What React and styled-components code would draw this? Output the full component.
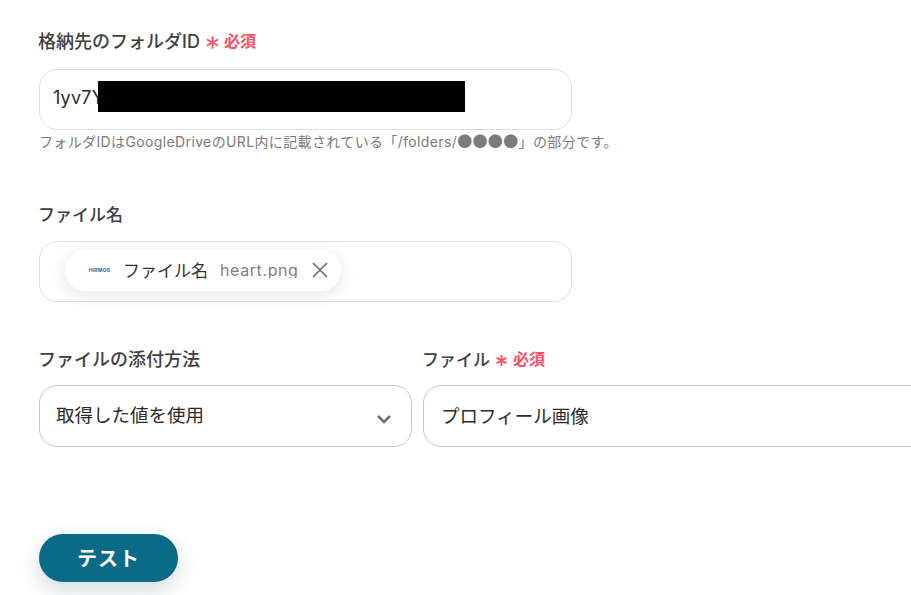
import React from 'react';
import styled, { createGlobalStyle } from 'styled-components';

const GlobalStyle = createGlobalStyle`
    html, body {
        margin: 0;
        background: #fff;
        overflow: hidden;
    }

    body {
        font-family: Inter, "Noto Sans CJK JP", sans-serif;
        color: #2b2b2b;
    }
`;

const Page = styled.div`
    width: 911px;
    height: 595px;
    overflow: hidden;
    box-sizing: border-box;
    padding: 27px 0 0 39px;
`;

const Field = styled.div`
    width: ${(p) => p.$width || '533px'};
    margin-bottom: ${(p) => p.$mb || '0'};
    flex-shrink: 0;
`;

const LabelRow = styled.div`
    display: flex;
    align-items: center;
    height: 26px;
    margin-bottom: ${(p) => p.$mb || '16px'};
`;

const Label = styled.label`
    margin-left: -1px;
    font-size: ${(p) => p.$size || '18px'};
    font-weight: 500;
    color: #404040;
`;

const Star = styled.svg`
    width: ${(p) => (p.$small ? '11px' : '13px')};
    height: ${(p) => (p.$small ? '11px' : '13px')};
    margin: 5px ${(p) => (p.$small ? '6px' : '5px')} 0 6px;
`;

const Required = styled.span`
    font-size: 16px;
    font-weight: 700;
    color: #ff4d63;
`;

const Box = styled.div`
    position: relative;
    display: flex;
    align-items: center;
    box-sizing: border-box;
    height: ${(p) => p.$height || '61px'};
    padding: 0 ${(p) => p.$pad || '13px'} ${(p) => p.$lift || '0'};
    border: 1px solid ${(p) => p.$border || '#dedfe4'};
    border-radius: 18px;
    background: #fff;
    font-size: ${(p) => p.$size || '18px'};
    letter-spacing: ${(p) => p.$spacing || '0'};
    color: #2b2b2b;
`;

const Redaction = styled.div`
    position: absolute;
    left: 58px;
    top: 11px;
    width: 367px;
    height: 31px;
    background: #000;
`;

const Help = styled.p`
    height: 20px;
    margin: 2px 0 0;
    font-size: 14px;
    letter-spacing: 0.37px;
    line-height: 20px;
    color: #7b7b7b;
    white-space: nowrap;
`;

const Dots = styled.span`
    font-family: "Noto Sans CJK JP", sans-serif;
    font-size: 15px;
    line-height: 1;
`;

const Chip = styled.div`
    display: flex;
    align-items: center;
    box-sizing: border-box;
    height: 41px;
    margin: -2px 0 0 12px;
    padding: 0 11px 2px 22px;
    border-radius: 21px;
    background: #fff;
    box-shadow: 0 4px 18px rgba(40, 50, 70, 0.12);
`;

const Logo = styled.span`
    width: 25px;
    font-size: 5px;
    font-weight: 700;
    letter-spacing: 0.2px;
    color: #2c6b94;
    text-align: center;
    margin-right: 11px;
`;

const ChipName = styled.span`
    font-size: 17px;
    color: #333;
    margin-right: 12px;
`;

const ChipValue = styled.span`
    display: block;
    height: 17px;
    overflow: hidden;
    margin-right: 11px;
    font-size: 16px;
    line-height: 18px;
    color: #808080;
    letter-spacing: 0.6px;
`;

const Row = styled.div`
    display: flex;
    gap: 11px;
    align-items: flex-start;
`;

const Chevron = styled.svg`
    position: absolute;
    right: 19px;
    top: 25px;
    width: 16px;
    height: 16px;
`;

const Button = styled.button`
    display: block;
    width: 139px;
    height: 48px;
    margin-top: 87px;
    padding: 0 0 2px;
    border: 0;
    border-radius: 24px;
    background: #0b6a85;
    color: #fff;
    font-family: inherit;
    font-size: 20px;
    font-weight: 700;
    letter-spacing: 1px;
    box-shadow: 0 8px 22px rgba(40, 70, 90, 0.2);
`;

function RequiredMark({ small }) {
    return (
        <>
            <Star $small={small} viewBox="0 0 13 13" fill="none" stroke="#ff4d63" strokeWidth={small ? 2.2 : 1.8} strokeLinecap="round">
                <path d="M6.5 1v11M1.5 3.7l10 5.6M11.5 3.7l-10 5.6" />
            </Star>
            <Required>必須</Required>
        </>
    );
}

function App() {
    return (
        <Page>
            <GlobalStyle />
            <Field $mb="48px">
                <LabelRow>
                    <Label>格納先のフォルダID</Label>
                    <RequiredMark />
                </LabelRow>
                <Box $lift="5px" $spacing="0.2px">
                    1yv7Y
                    <Redaction />
                </Box>
                <Help>フォルダIDはGoogleDriveのURL内に記載されている「/folders/<Dots>●●●●</Dots>」の部分です。</Help>
            </Field>
            <Field $mb="43px">
                <LabelRow $mb="15px">
                    <Label $size="17px">ファイル名</Label>
                </LabelRow>
                <Box>
                    <Chip>
                        <Logo>HIRMOS</Logo>
                        <ChipName>ファイル名</ChipName>
                        <ChipValue>heart.png</ChipValue>
                        <svg width="20" height="20" viewBox="0 0 20 20" fill="none" stroke="#6e6e6e" strokeWidth="1.7">
                            <path d="M3 3l14 14M17 3L3 17" />
                        </svg>
                    </Chip>
                </Box>
            </Field>
            <Row>
                <Field $width="373px">
                    <LabelRow $mb="14px">
                        <Label>ファイルの添付方法</Label>
                    </LabelRow>
                    <Box $height="62px" $pad="16px" $lift="4px" $size="18.5px" $border="#c9c9c9">
                        取得した値を使用
                        <Chevron viewBox="0 0 16 16" fill="none" stroke="#6f6f6f" strokeWidth="2.6">
                            <path d="M2 5l6 6 6-6" />
                        </Chevron>
                    </Box>
                </Field>
                <Field $width="520px">
                    <LabelRow $mb="14px">
                        <Label $size="17px">ファイル</Label>
                        <RequiredMark small />
                    </LabelRow>
                    <Box $height="62px" $pad="17px" $lift="2px" $size="18.5px" $border="#c9c9c9">プロフィール画像</Box>
                </Field>
            </Row>
            <Button>テスト</Button>
        </Page>
    );
}

export default App;
